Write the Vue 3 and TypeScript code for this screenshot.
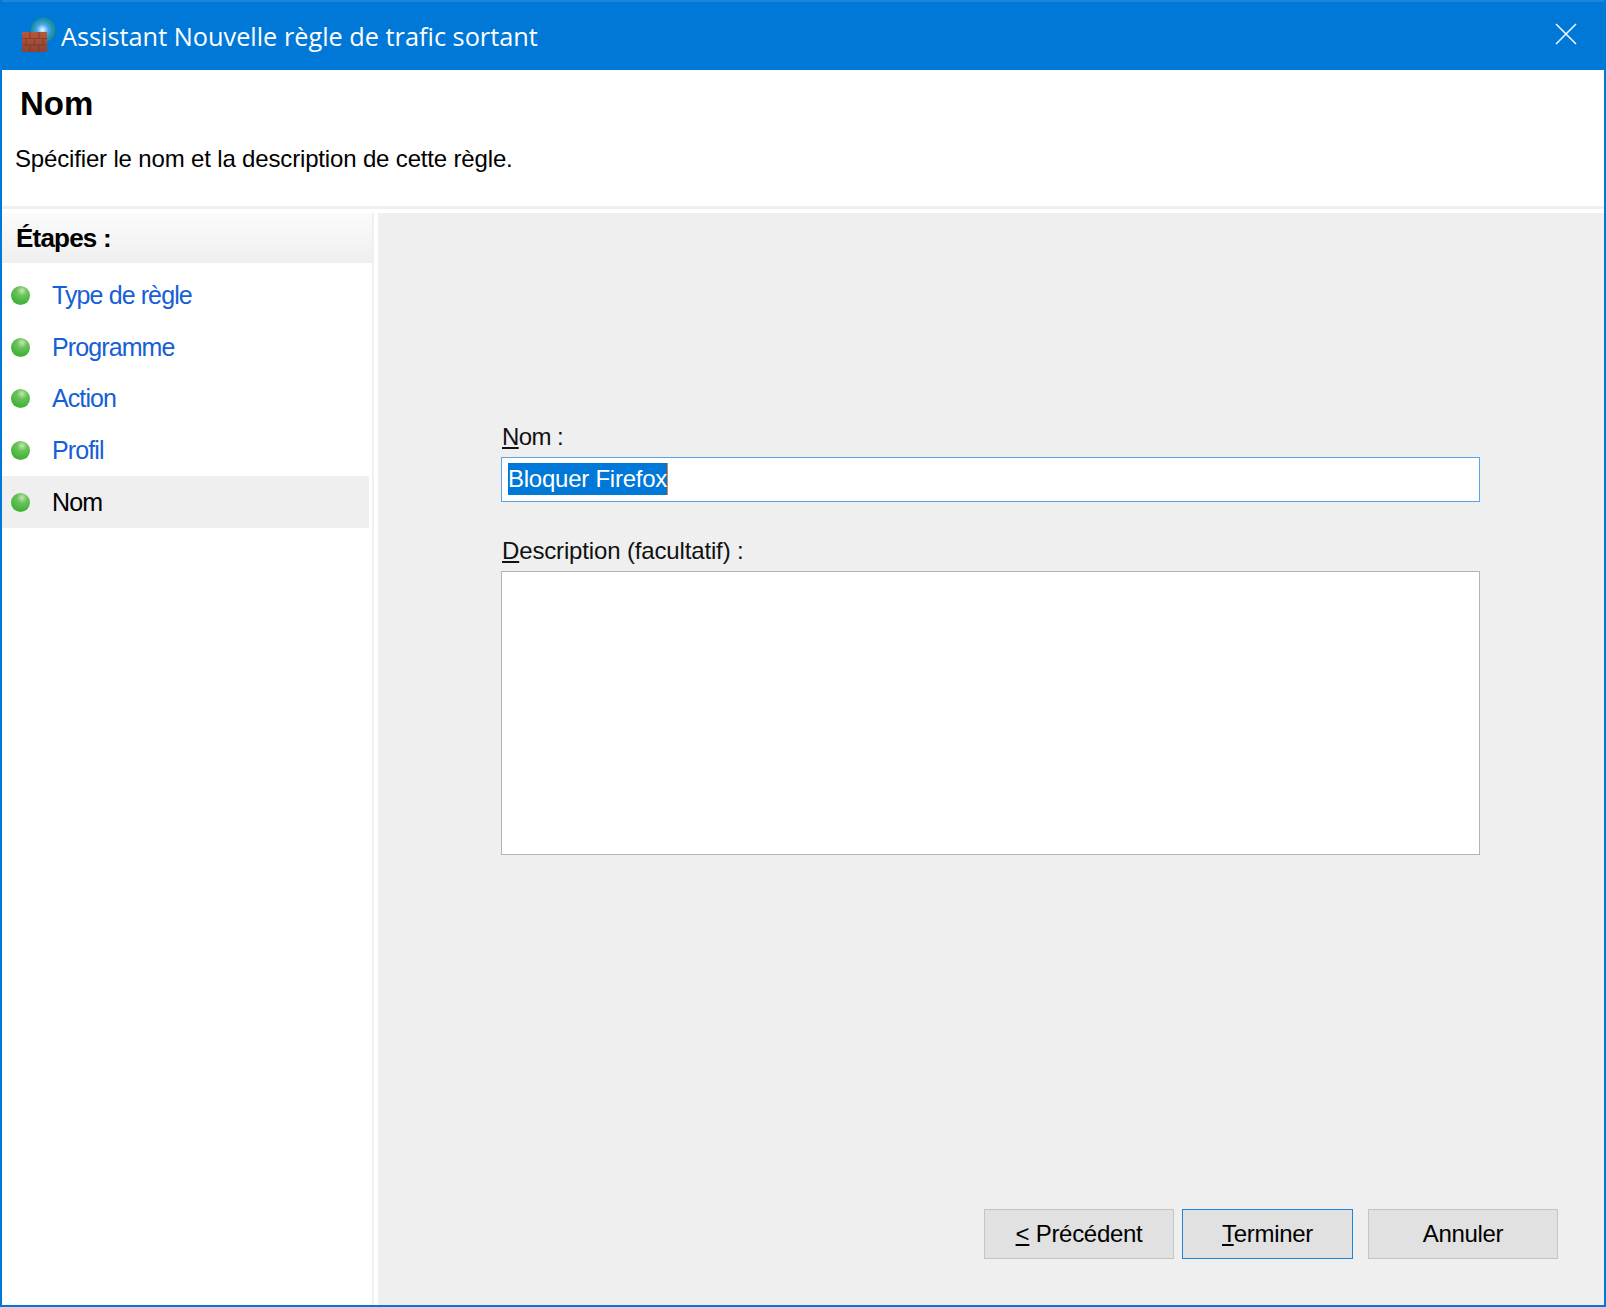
<script setup lang="ts">
const steps = ['Type de règle', 'Programme', 'Action', 'Profil', 'Nom']
const current = 'Nom'
</script>

<template>
  <div class="window">
    <div class="titlebar">
      <svg class="app-icon" width="34" height="38" viewBox="0 0 34 38">
        <defs>
          <radialGradient id="globe" cx="0.48" cy="0.5" r="0.6">
            <stop offset="0" stop-color="#eefaff" />
            <stop offset="0.4" stop-color="#46a6ee" />
            <stop offset="0.75" stop-color="#1d8fa0" />
            <stop offset="1" stop-color="#3fb04a" />
          </radialGradient>
          <linearGradient id="brick" x1="0" y1="0" x2="0" y2="1">
            <stop offset="0" stop-color="#b9563c" />
            <stop offset="1" stop-color="#8e4330" />
          </linearGradient>
        </defs>
        <circle cx="22" cy="15" r="12" fill="url(#globe)" />
        <rect x="1" y="17" width="25" height="20" fill="url(#brick)" />
        <path d="M1 23.5h25M1 30h25M9 17v6.5M18 17v6.5M5 23.5V30M13.500 23.500V30M22 23.500V30M9 30v7M18 30v7" stroke="#74392a" stroke-width="1.200" fill="none" opacity="0.7" />
      </svg>
      <span class="title">Assistant Nouvelle règle de trafic sortant</span>
      <svg class="close" width="22" height="22" viewBox="0 0 22 22">
        <path d="M1 1l20 20M21 1L1 21" stroke="#fff" stroke-width="1.500" fill="none" />
      </svg>
    </div>

    <div class="header">
      <h1>Nom</h1>
      <p>Spécifier le nom et la description de cette règle.</p>
    </div>

    <div class="body">
      <aside class="sidebar">
        <div class="side-head">Étapes :</div>
        <ul>
          <li v-for="step in steps" :key="step" :class="{ active: step === current }">
            <span class="dot"></span>
            <span>{{ step }}</span>
          </li>
        </ul>
      </aside>

      <main class="content">
        <div class="form">
          <label><u>N</u>om :</label>
          <div class="name-field"><span class="selected">Bloquer Firefox</span></div>
          <label class="second"><u>D</u>escription (facultatif) :</label>
          <textarea class="desc-field"></textarea>
        </div>
        <div class="buttons">
          <button type="button"><u>&lt;</u> Précédent</button>
          <button type="button" class="primary"><u>T</u>erminer</button>
          <button type="button" class="last">Annuler</button>
        </div>
      </main>
    </div>
  </div>
</template>

<style>
html,
body {
  margin: 0;
  background: #fff;
}
</style>

<style scoped>
.window {
  box-sizing: border-box;
  width: 1606px;
  height: 1307px;
  border: 2px solid #0078d7;
  border-top: 0;
  display: flex;
  flex-direction: column;
  background: #fff;
  color: #000;
  font-family: "Liberation Sans", Arial, sans-serif;
}

.titlebar {
  height: 70px;
  flex-shrink: 0;
  display: flex;
  align-items: center;
  background: #0078d7;
  border-top: 2px solid #1a86dc;
  box-sizing: border-box;
  color: #fff;
  padding: 0 19px 0 19px;
}

.app-icon {
  flex-shrink: 0;
  margin-top: -4px;
}

.title {
  flex: 1;
  margin-left: 6px;
  font-family: "Open Sans", "Noto Sans", sans-serif;
  font-size: 25.300px;
  white-space: nowrap;
}

.close {
  margin-right: 8px;
  margin-top: -4px;
}

.header {
  height: 139px;
  flex-shrink: 0;
  box-sizing: border-box;
  padding: 17px 0 0 13px;
  border-bottom: 3px solid #f0f0f0;
}

.header h1 {
  margin: 0 0 0 5px;
  font-size: 33px;
  line-height: 34px;
  font-weight: 700;
}

.header p {
  margin: 24px 0 0;
  font-size: 24px;
  line-height: 28px;
  letter-spacing: -0.160px;
}

.body {
  flex: 1;
  min-height: 0;
  display: flex;
  gap: 4px;
  padding-top: 4px;
}

.sidebar {
  width: 372px;
  flex-shrink: 0;
  box-sizing: border-box;
  border-right: 2px solid #f0f0f0;
}

.side-head {
  height: 50px;
  box-sizing: border-box;
  padding: 10px 0 0 14px;
  font-size: 26px;
  line-height: 30px;
  font-weight: 700;
  letter-spacing: -0.800px;
  background: linear-gradient(#fbfbfb, #efefef);
}

ul {
  list-style: none;
  margin: 7px 0 0;
  padding: 0;
}

li {
  height: 51.600px;
  margin-right: 3px;
  display: flex;
  align-items: center;
  gap: 22px;
  padding-left: 9px;
  font-size: 25px;
  letter-spacing: -0.900px;
  color: #1560d4;
}

li.active {
  background: #efefef;
  color: #000;
}

.dot {
  width: 19px;
  height: 19px;
  border-radius: 50%;
  background: radial-gradient(circle at 58% 25%, #c4e8b4 0, #6cc45c 28%, #42b238 70%, #5cbc50 100%);
}

.content {
  flex: 1;
  min-width: 0;
  display: flex;
  flex-direction: column;
  background: #efefef;
  padding: 210px 46px 46px 123px;
  box-sizing: border-box;
}

.form {
  flex: 1;
  display: flex;
  flex-direction: column;
  font-size: 24px;
  letter-spacing: -0.600px;
}

label {
  line-height: 28px;
  margin-left: 1px;
  color: #111;
}

.second {
  margin-top: 35px;
  letter-spacing: -0.150px;
}

.name-field {
  width: 979px;
  height: 45px;
  margin-top: 6px;
  box-sizing: border-box;
  background: #fff;
  border: 1.500px solid #5aa3e6;
  padding: 5px 0 0 6px;
  font-size: 24px;
  letter-spacing: -0.250px;
}

.selected {
  display: inline-block;
  height: 32px;
  line-height: 32px;
  background: #0078d7;
  border-right: 1px solid #e8833a;
  color: #fff;
}

.desc-field {
  display: block;
  width: 979px;
  height: 284px;
  margin-top: 6px;
  box-sizing: border-box;
  background: #fff;
  border: 1.500px solid #b4b4b4;
  border-radius: 0;
  outline: none;
  resize: none;
}

.buttons {
  display: flex;
  justify-content: flex-end;
  gap: 8px;
}

button {
  width: 190px;
  height: 50px;
  box-sizing: border-box;
  background: #e1e1e1;
  border: 1.500px solid #c4c4c4;
  border-radius: 0;
  padding: 0;
  font-family: inherit;
  font-size: 24px;
  letter-spacing: -0.300px;
  color: #000;
}

button.primary {
  width: 171px;
  border: 1.500px solid #1f84d8;
}

button.last {
  margin-left: 7px;
}
</style>
